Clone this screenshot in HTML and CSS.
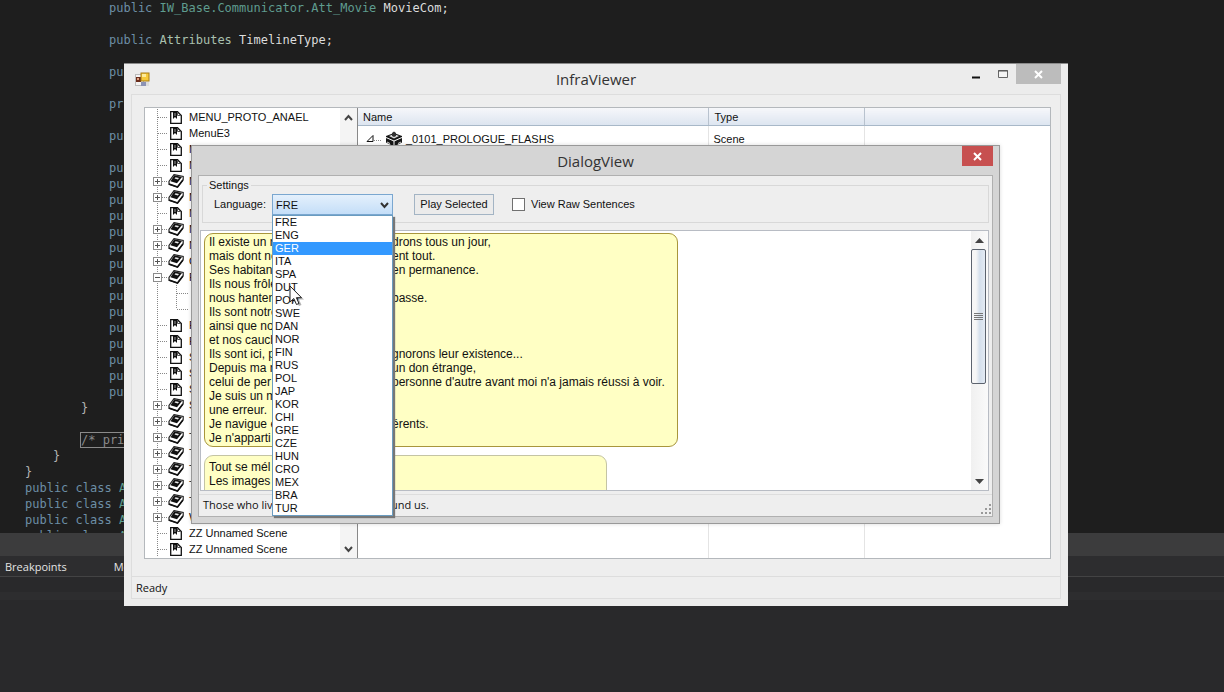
FILE: index.html
```html
<!DOCTYPE html>
<html lang="en">

<head>
    <meta charset="UTF-8">
    <meta name="viewport" content="width=device-width, initial-scale=1.0">
    <title>InfraViewer</title>
    <link rel="stylesheet" href="styles.css">
</head>

<body>
    <!-- shared icons -->
    <svg class="sprite" aria-hidden="true">
        <symbol id="line" viewBox="0 0 23 16">
            <path d="M12.5 0V16M13 8.5H23" class="dots" />
        </symbol>
        <symbol id="plus" viewBox="0 0 23 16">
            <path d="M12.5 0V16M13 8.5H23" class="dots" />
            <rect x="8.500" y="4.500" width="8" height="8" fill="#fff" stroke="#8c8c8c" />
            <path d="M10 8.500H15M12.500 6V11" stroke="#555" />
        </symbol>
        <symbol id="minus" viewBox="0 0 23 16">
            <path d="M12.5 0V16M13 8.5H23" class="dots" />
            <rect x="8.500" y="4.500" width="8" height="8" fill="#fff" stroke="#8c8c8c" />
            <path d="M10 8.500H15" stroke="#555" />
        </symbol>
        <symbol id="child" viewBox="0 0 44 16">
            <path d="M12.5 0V16M31.5 0V16M32 8.5H44" class="dots" />
        </symbol>
        <symbol id="lastchild" viewBox="0 0 44 16">
            <path d="M12.5 0V16M31.5 0V8M32 8.5H44" class="dots" />
        </symbol>
        <symbol id="page" viewBox="0 0 16 16">
            <path d="M2.700 2.700H9.500L13.300 6.500V14.300H2.700Z" fill="#fff" stroke="#111" stroke-width="1.300" />
            <path d="M5 3H9V10L7 8L5 10Z" fill="#111" />
            <path d="M7 4V7" stroke="#999" />
            <path d="M9.500 3V6.500H13" fill="none" stroke="#555" />
        </symbol>
        <symbol id="book" viewBox="0 0 16 16">
            <path d="M6 1.600L15.200 3.500V6.500L9.500 14L1 11.200V8.500Z" fill="#fff" stroke="#222" stroke-width="1.200" />
            <path d="M6.300 2.200L14 4L9 10.300L2.500 8.300Z" fill="#111" />
            <path d="M7.500 4.200L11 5L9.800 6.400L6.500 5.500Z" fill="#e8e8e8" />
            <path d="M1 11L9.500 14L15 7" fill="none" stroke="#111" stroke-width="1.600" />
        </symbol>
        <symbol id="cross" viewBox="0 0 9 9">
            <path d="M1 1L8 8M8 1L1 8" stroke="#fff" stroke-width="2" />
        </symbol>
    </svg>

    <!-- code editor behind the windows -->
    <main class="ide">
        <pre class="code">
			<b>public</b> <i>IW_Base.Communicator.Att_Movie</i> <em>MovieCom;</em>

			<b>public</b> <u>Attributes</u> <em>TimelineType;</em>

			<b>pu</b>

			<b>pr</b>

			<b>pu</b>

			<b>pu</b>
			<b>pu</b>
			<b>pu</b>
			<b>pu</b>
			<b>pu</b>
			<b>pu</b>
			<b>pu</b>
			<b>pu</b>
			<b>pu</b>
			<b>pu</b>
			<b>pu</b>
			<b>pu</b>
			<b>pu</b>
			<b>pu</b>
			<b>pu</b>
		}

		<span class="folded">/* priv</span>
	}
}
<b>public class</b> <i>At</i>
<b>public class</b> <i>At</i>
<b>public class</b> <i>At</i>
<b>public class</b> <i>At</i></pre>
        <div class="splitter"></div>
        <nav class="panel-tabs">
            <a href="#">Breakpoints</a>
            <a href="#">Modules</a>
        </nav>
        <div class="panel-tools"></div>
        <div class="panel-body"></div>
    </main>

    <section class="window viewer">
        <header class="titlebar">
            <svg class="app-icon" width="15" height="15" viewBox="0 0 15 15">
                <rect x="0.500" y="2.500" width="8" height="11" fill="#f4f4f4" stroke="#bbb" />
                <rect x="1" y="5" width="5" height="5" fill="#6b2d1c" />
                <rect x="2" y="6" width="2" height="2" fill="#e0a080" />
                <rect x="6" y="1" width="8" height="8" fill="#f6c93a" stroke="#a87c14" />
                <rect x="7" y="2" width="4" height="3" fill="#fdeb9a" />
                <rect x="6" y="10" width="6" height="4" fill="#8c93b5" />
                <rect x="11" y="10" width="3" height="4" fill="#dcdcdc" />
            </svg>
            <h1>InfraViewer</h1>
            <div class="buttons">
                <button class="min" aria-label="Minimize"><svg width="10" height="10"><path d="M1 8.500H9" stroke="#111" stroke-width="2" /></svg></button>
                <button class="max" aria-label="Maximize"><svg width="12" height="10"><path d="M1.500 1.500H10.500V8.500H1.500Z" fill="#f4f4f4" stroke="#666" /><path d="M1 2H11" stroke="#555" /></svg></button>
                <button class="close" aria-label="Close"><svg width="9" height="9"><use href="#cross" /></svg></button>
            </div>
        </header>
        <div class="client">
            <div class="workspace">
                <div class="tree">
                    <ul>
                        <li><svg class="gutter"><use href="#line" /></svg><svg class="icon"><use href="#page" /></svg>MENU_PROTO_ANAEL</li>
                        <li><svg class="gutter"><use href="#line" /></svg><svg class="icon"><use href="#page" /></svg>MenuE3</li>
                        <li><svg class="gutter"><use href="#line" /></svg><svg class="icon"><use href="#page" /></svg>MenuE</li>
                        <li><svg class="gutter"><use href="#line" /></svg><svg class="icon"><use href="#page" /></svg>M</li>
                        <li><svg class="gutter"><use href="#plus" /></svg><svg class="icon"><use href="#book" /></svg>M</li>
                        <li><svg class="gutter"><use href="#plus" /></svg><svg class="icon"><use href="#book" /></svg>M</li>
                        <li><svg class="gutter"><use href="#line" /></svg><svg class="icon"><use href="#page" /></svg>M</li>
                        <li><svg class="gutter"><use href="#plus" /></svg><svg class="icon"><use href="#book" /></svg>M</li>
                        <li><svg class="gutter"><use href="#plus" /></svg><svg class="icon"><use href="#book" /></svg>N</li>
                        <li><svg class="gutter"><use href="#plus" /></svg><svg class="icon"><use href="#book" /></svg>O</li>
                        <li><svg class="gutter"><use href="#minus" /></svg><svg class="icon"><use href="#book" /></svg>P</li>
                        <li><svg class="gutter deep"><use href="#child" /></svg><svg class="icon"><use href="#page" /></svg></li>
                        <li><svg class="gutter deep"><use href="#lastchild" /></svg><svg class="icon"><use href="#page" /></svg></li>
                        <li><svg class="gutter"><use href="#line" /></svg><svg class="icon"><use href="#page" /></svg>P</li>
                        <li><svg class="gutter"><use href="#line" /></svg><svg class="icon"><use href="#page" /></svg>R</li>
                        <li><svg class="gutter"><use href="#line" /></svg><svg class="icon"><use href="#page" /></svg>S</li>
                        <li><svg class="gutter"><use href="#line" /></svg><svg class="icon"><use href="#page" /></svg>S</li>
                        <li><svg class="gutter"><use href="#line" /></svg><svg class="icon"><use href="#page" /></svg>S</li>
                        <li><svg class="gutter"><use href="#plus" /></svg><svg class="icon"><use href="#book" /></svg>S</li>
                        <li><svg class="gutter"><use href="#plus" /></svg><svg class="icon"><use href="#book" /></svg>T</li>
                        <li><svg class="gutter"><use href="#plus" /></svg><svg class="icon"><use href="#book" /></svg>T</li>
                        <li><svg class="gutter"><use href="#plus" /></svg><svg class="icon"><use href="#book" /></svg>T</li>
                        <li><svg class="gutter"><use href="#plus" /></svg><svg class="icon"><use href="#book" /></svg>T</li>
                        <li><svg class="gutter"><use href="#plus" /></svg><svg class="icon"><use href="#book" /></svg>T</li>
                        <li><svg class="gutter"><use href="#plus" /></svg><svg class="icon"><use href="#book" /></svg>T</li>
                        <li><svg class="gutter"><use href="#plus" /></svg><svg class="icon"><use href="#book" /></svg>W</li>
                        <li><svg class="gutter"><use href="#line" /></svg><svg class="icon"><use href="#page" /></svg>ZZ Unnamed Scene</li>
                        <li><svg class="gutter"><use href="#line" /></svg><svg class="icon"><use href="#page" /></svg>ZZ Unnamed Scene</li>
                    </ul>
                    <div class="scroll">
                        <button aria-label="Scroll up"><svg width="9" height="7"><path d="M1 6L4.500 2L8 6" fill="none" stroke="#444" stroke-width="2" /></svg></button>
                        <button aria-label="Scroll down"><svg width="9" height="7"><path d="M1 1L4.500 5L8 1" fill="none" stroke="#444" stroke-width="2" /></svg></button>
                    </div>
                </div>
                <div class="list">
                    <table>
                        <thead>
                            <tr>
                                <th class="name">Name</th>
                                <th class="type">Type</th>
                                <th></th>
                            </tr>
                        </thead>
                        <tbody>
                            <tr>
                                <td>
                                    <div class="scene">
                                        <svg width="16" height="16" viewBox="0 0 16 16">
                                            <path d="M1 10.500L7 4.500V10.500Z" fill="none" stroke="#111" />
                                            <path d="M8 9.500H16" class="dots" />
                                        </svg>
                                        <svg width="16" height="16" viewBox="0 0 16 16">
                                            <path d="M0 5L8 2L16 5V11.500L8 15.500L0 11.500Z" fill="#161616" />
                                            <path d="M0 6.500L8 10L16 6.500M8 10V16" fill="none" stroke="#fff" />
                                            <path d="M3 5L8 3L13 5L8 7.500Z" fill="#ddd" />
                                            <path d="M6 2L8 0.500L10 2V5L8 6L6 5Z" fill="#333" />
                                            <path d="M1 11L4 12.500M12 12.500L15 11" stroke="#ddd" />
                                        </svg>
                                        _0101_PROLOGUE_FLASHS
                                    </div>
                                </td>
                                <td>Scene</td>
                                <td></td>
                            </tr>
                        </tbody>
                    </table>
                </div>
            </div>
            <footer class="status">Ready</footer>
        </div>
    </section>

    <section class="window dialog">
        <header class="titlebar">
            <h2>DialogView</h2>
            <div class="buttons">
                <button class="close" aria-label="Close"><svg width="9" height="9"><use href="#cross" /></svg></button>
            </div>
        </header>
        <div class="client">
            <fieldset>
                <legend>Settings</legend>
                <label for="language">Language:</label>
                <div class="combo">
                    <select id="language">
                        <option>FRE</option>
                    </select>
                    <svg class="arrow" width="9" height="7"><path d="M1 1L4.500 5L8 1" fill="none" stroke="#333" stroke-width="2" /></svg>
                    <ul class="options">
                        <li>FRE</li>
                        <li>ENG</li>
                        <li class="selected">GER</li>
                        <li>ITA</li>
                        <li>SPA</li>
                        <li>DUT</li>
                        <li>POR</li>
                        <li>SWE</li>
                        <li>DAN</li>
                        <li>NOR</li>
                        <li>FIN</li>
                        <li>RUS</li>
                        <li>POL</li>
                        <li>JAP</li>
                        <li>KOR</li>
                        <li>CHI</li>
                        <li>GRE</li>
                        <li>CZE</li>
                        <li>HUN</li>
                        <li>CRO</li>
                        <li>MEX</li>
                        <li>BRA</li>
                        <li>TUR</li>
                    </ul>
                </div>
                <button class="play">Play Selected</button>
                <input type="checkbox" id="raw">
                <label for="raw">View Raw Sentences</label>
            </fieldset>
            <div class="sentences">
                <div class="bubbles">
                    <div class="bubble current">
                        <p><span>Il existe un m</span>drons tous un jour,</p>
                        <p><span>mais dont no</span>ent tout.</p>
                        <p><span>Ses habitan</span>en permanence.</p>
                        <p><span>Ils nous frôle</span>,</p>
                        <p><span>nous hanten</span>basse.</p>
                        <p><span>Ils sont notre</span></p>
                        <p><span>ainsi que no</span></p>
                        <p><span>et nos cauch</span></p>
                        <p><span>Ils sont ici, p</span>gnorons leur existence...</p>
                        <p><span>Depuis ma n</span>un don étrange,</p>
                        <p><span>celui de per</span>personne d'autre avant moi n'a jamais réussi à voir.</p>
                        <p><span>Je suis un m</span></p>
                        <p><span>une erreur.</span></p>
                        <p><span>Je navigue e</span>érents.</p>
                        <p><span>Je n'apparti</span></p>
                    </div>
                    <div class="bubble next">
                        <p>Tout se mél</p>
                        <p>Les images</p>
                        <p>Les mots</p>
                    </div>
                </div>
                <div class="scroll">
                    <button aria-label="Scroll up"><svg width="9" height="5"><path d="M0 5L4.500 0L9 5Z" fill="#444" /></svg></button>
                    <div class="thumb"><svg width="9" height="8"><path d="M0 0.500H9M0 2.500H9M0 4.500H9M0 6.500H9" stroke="#777" /></svg></div>
                    <button aria-label="Scroll down"><svg width="9" height="5"><path d="M0 0L4.500 5L9 0Z" fill="#444" /></svg></button>
                </div>
            </div>
            <footer class="status">
                <p><span>Those who liv</span>und us.</p>
                <svg width="12" height="12"><path d="M9 1H11M5 5H7M9 5H11M1 9H3M5 9H7M9 9H11" stroke="#999" stroke-width="2" /></svg>
            </footer>
        </div>
    </section>

    <svg class="pointer" width="16" height="22" viewBox="0 0 16 22">
        <path d="M3 3V19L7 15.500L10 21L12.500 20L10 14.500H15Z" fill="#000" opacity="0.300" />
        <path d="M1 1V17L4.800 13.500L7.500 19.500L10 18.500L7.400 12.700H12.500Z" fill="#fff" stroke="#222" />
    </svg>
</body>

</html>
```

FILE: styles.css
```css
* {
    box-sizing: border-box;
}

body {
    margin: 0;
    height: 100vh;
    overflow: hidden;
    position: relative;
    background: #29292b;
    font-family: "Liberation Sans", Arial, sans-serif;
    font-size: 11px;
    color: #111;
}

h1,
h2,
p,
ul,
pre {
    margin: 0;
    padding: 0;
}

ul {
    list-style: none;
}

button {
    padding: 0;
    border: 0;
    background: none;
    font: inherit;
    color: inherit;
    display: flex;
    align-items: center;
    justify-content: center;
}

svg {
    display: block;
    flex: none;
}

.sprite {
    position: absolute;
    width: 0;
    height: 0;
}

.dots {
    fill: none;
    stroke: #888;
    stroke-dasharray: 1 1;
}

/* editor */
.ide {
    height: 100%;
    display: flex;
    flex-direction: column;
}

.code {
    flex: 1;
    overflow: hidden;
    padding-left: 25px;
    background: #1e1e1e;
    color: #b4b4b4;
    font-family: "DejaVu Sans Mono", monospace;
    font-size: 12px;
    line-height: 16px;
    tab-size: 28px;
}

.code b {
    font-weight: normal;
    color: #6d8fa6;
}

.code i {
    font-style: normal;
    color: #5f9c8f;
}

.code u {
    text-decoration: none;
    color: #a9c0ae;
}

.code em {
    font-style: normal;
    color: #dcdcdc;
}

.folded {
    color: #8a8a8a;
    outline: 1px solid #8a8a8a;
}

.splitter {
    height: 23px;
    background: #3c3c3d;
}

.panel-tabs {
    height: 21px;
    display: flex;
    gap: 47px;
    padding-left: 5px;
    background: #2d2d2f;
    border-bottom: 1px solid #434344;
    font-family: "Open Sans", sans-serif;
    font-size: 11px;
    line-height: 22px;
}

.panel-tabs a {
    color: #e4e4e4;
    text-decoration: none;
}

.panel-tools {
    height: 23px;
    background: #29292b;
    border-bottom: 8px solid #2d2d2f;
}

.panel-body {
    height: 92px;
}

/* windows */
.window {
    position: absolute;
    display: flex;
    flex-direction: column;
}

.viewer {
    top: 63px;
    right: 156px;
    bottom: 86px;
    left: 124px;
    padding: 0 7px 7px;
    background: #ececec;
    border-top: 1px solid #8a8a8a;
}

.dialog {
    top: 145px;
    right: 224px;
    bottom: 168px;
    left: 191px;
    padding: 0 6px 6px;
    background: #d5d5d5;
    border: 1px solid #999;
    box-shadow: 0 0 4px rgba(0, 0, 0, 0.15);
}

.titlebar {
    display: grid;
    grid-template-columns: 1fr auto 1fr;
    height: 30px;
    flex: none;
}

.dialog .titlebar {
    height: 29px;
}

.titlebar h1,
.titlebar h2 {
    grid-column: 2;
    font-family: "Open Sans", sans-serif;
    font-size: 15px;
    font-weight: normal;
    line-height: 30px;
    color: #333;
}

.app-icon {
    margin: 8px 4px;
}

.buttons {
    grid-column: 3;
    display: flex;
    justify-content: flex-end;
    height: 20px;
}

.buttons button {
    width: 27px;
}

.buttons .close {
    width: 45px;
    background: #bcbcbc;
}

.dialog .buttons .close {
    width: 31px;
    background: #c75050;
}

.client {
    flex: 1;
    min-height: 0;
    display: flex;
    flex-direction: column;
    background: #eee;
    border: 1px solid #ddd;
}

.dialog .client {
    border-color: #b0b0b0;
}

.workspace {
    flex: 1;
    min-height: 0;
    display: flex;
    margin: 12px 9px 17px 12px;
    background: #fff;
    border: 1px solid #b4b8bc;
}

.status {
    flex: none;
    height: 22px;
    padding-left: 4px;
    border-top: 1px solid #ddd;
    font-family: "Open Sans", sans-serif;
    font-size: 11px;
    line-height: 22px;
}

/* scene tree */
.tree {
    width: 213px;
    flex: none;
    display: flex;
    overflow: hidden;
    border-right: 1px solid #888;
}

.tree ul {
    flex: 1;
    padding-top: 1px;
}

.tree li {
    display: flex;
    height: 16px;
    line-height: 16px;
    white-space: nowrap;
}

.gutter {
    width: 23px;
    height: 16px;
}

.deep {
    width: 44px;
}

.icon {
    width: 16px;
    height: 16px;
    margin-right: 5px;
}

.scroll {
    width: 17px;
    flex: none;
    display: flex;
    flex-direction: column;
    justify-content: space-between;
    background: #f4f4f4;
}

.scroll button {
    width: 100%;
    height: 18px;
}

/* scene list */
.list {
    flex: 1;
}

table {
    width: 100%;
    height: 100%;
    border-collapse: collapse;
    table-layout: fixed;
}

th,
td {
    padding: 0 5px;
    text-align: left;
    vertical-align: top;
    font-weight: normal;
    line-height: 16px;
    border-right: 1px solid #e4e4e4;
}

th {
    height: 17px;
    padding: 1px 6px 0;
    background: linear-gradient(#f6f7fa, #dde5f0);
    border-right-color: #b8c2ce;
    border-bottom: 1px solid #a8b8c8;
}

th:last-child,
td:last-child {
    border-right: 0;
}

td {
    padding-top: 5px;
}

.name {
    width: 350px;
    padding-left: 5px;
}

.type {
    width: 156px;
}

.scene {
    display: flex;
    gap: 4px;
    padding-left: 3px;
}

/* dialog settings */
fieldset {
    height: 45px;
    margin: 2px 3px 7px;
    padding: 2px 11px 0;
    border: 1px solid #d8d8d8;
    display: flex;
    align-items: flex-start;
    line-height: 21px;
}

legend {
    margin-left: -7px;
    padding: 0 2px;
    line-height: 14px;
}

.combo {
    position: relative;
    width: 121px;
    margin: 0 21px 0 6px;
}

select {
    appearance: none;
    display: block;
    width: 100%;
    height: 21px;
    padding: 0 3px;
    border: 1px solid #7aa7d0;
    border-radius: 0;
    background: linear-gradient(#e4f0fc, #c4def8);
    font: inherit;
    color: inherit;
}

.arrow {
    position: absolute;
    top: 8px;
    right: 4px;
}

.options {
    position: absolute;
    z-index: 2;
    top: 21px;
    left: 0;
    width: 100%;
    background: #fff;
    border: 1px solid #6a9cc0;
    box-shadow: 2px 2px 1px #777;
    line-height: 13px;
}

.options li {
    padding-left: 2px;
}

.options .selected {
    background: #3399ff;
    color: #fff;
}

.play {
    width: 80px;
    height: 21px;
    border: 1px solid #a3b4c4;
    background: #ebebeb;
}

input[type="checkbox"] {
    appearance: none;
    width: 13px;
    height: 13px;
    margin: 4px 6px 0 18px;
    border: 1px solid #707070;
    background: #fff;
}

/* sentences */
.sentences {
    flex: 1;
    min-height: 0;
    display: flex;
    margin: 0 3px 3px 1px;
    background: #fff;
    border: 1px solid #b8bcc4;
}

.bubbles {
    flex: 1;
    overflow: hidden;
    padding: 2px 3px;
}

.bubble {
    margin-bottom: 8px;
    padding: 1px 4px;
    border: 1px solid #c4c4a4;
    border-radius: 9px;
    background: #ffffc4;
    font-size: 12px;
    line-height: 14px;
    white-space: nowrap;
}

.current {
    width: 474px;
    border-color: #a8963c;
}

.next {
    width: 403px;
    padding-top: 4px;
}

.bubble span,
.status span {
    display: inline-block;
    width: 183px;
}

.bubble p {
    height: 14px;
}

.sentences .scroll {
    background: linear-gradient(90deg, #f0f0f0, #fafafa);
}

.thumb {
    width: 15px;
    height: 135px;
    margin-bottom: auto;
    border: 1px solid #5c636e;
    border-radius: 2px;
    background: linear-gradient(90deg, #f6f6f6 30%, #d4dfec 60%, #e4ebf4);
    display: flex;
    align-items: center;
    justify-content: center;
}

.dialog .status {
    display: flex;
    justify-content: space-between;
    align-items: flex-end;
}

.dialog .status span {
    width: 188px;
}

.pointer {
    position: absolute;
    z-index: 3;
    top: 285px;
    left: 289px;
}
```
